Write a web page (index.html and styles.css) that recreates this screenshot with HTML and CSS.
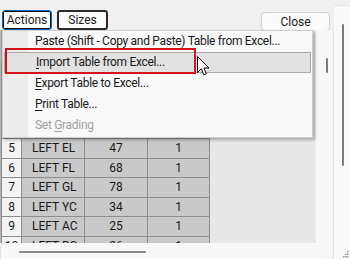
FILE: index.html
```html
<!DOCTYPE html>
<html lang="en">
<head>
  <meta charset="UTF-8" />
  <title>Grading Table</title>
  <link rel="stylesheet" href="styles.css">
</head>
<body>
  <div class="window">
    <div class="content">
      <div class="toolbar">
        <button class="btn btn-focus">Actions</button>
        <button class="btn btn-sizes">Sizes</button>
        <button class="btn btn-close">Close</button>
      </div>
      <div class="grid-area">
        <div class="grid-col">
          <div class="grid-view">
            <table class="grid">
              <colgroup>
                <col class="c-num"><col class="c-name"><col class="c-val"><col class="c-step">
              </colgroup>
              <tr class="head"><th></th><th>Point</th><th>Value</th><th>Step</th></tr>
              <tr><td class="num">1</td><td>LEFT AL</td><td class="mid">12</td><td class="mid">1</td></tr>
              <tr><td class="num">2</td><td>LEFT BL</td><td class="mid">20</td><td class="mid">1</td></tr>
              <tr><td class="num">3</td><td>LEFT CL</td><td class="mid">31</td><td class="mid">1</td></tr>
              <tr><td class="num">4</td><td>LEFT DL</td><td class="mid">40</td><td class="mid">1</td></tr>
              <tr><td class="num">5</td><td>LEFT EL</td><td class="mid">47</td><td class="mid">1</td></tr>
              <tr><td class="num">6</td><td>LEFT FL</td><td class="mid">68</td><td class="mid">1</td></tr>
              <tr><td class="num">7</td><td>LEFT GL</td><td class="mid">78</td><td class="mid">1</td></tr>
              <tr><td class="num">8</td><td>LEFT YC</td><td class="mid">34</td><td class="mid">1</td></tr>
              <tr><td class="num">9</td><td>LEFT AC</td><td class="mid">25</td><td class="mid">1</td></tr>
              <tr><td class="num">10</td><td>LEFT BC</td><td class="mid">26</td><td class="mid">1</td></tr>
            </table>
          </div>
          <div class="hscroll"><div class="hthumb"></div></div>
        </div>
        <div class="vscroll"><div class="vthumb"></div></div>
      </div>
    </div>
    <div class="outer-scroll">
      <div class="othumb"></div>
      <svg class="grip" width="6" height="7" viewBox="0 0 6 7">
        <rect x="4" y="0" width="1.5" height="1.5" fill="#9a9a9a"/>
        <rect x="2" y="2.5" width="1.5" height="1.5" fill="#9a9a9a"/>
        <rect x="4" y="2.5" width="1.5" height="1.5" fill="#9a9a9a"/>
        <rect x="0" y="5" width="1.5" height="1.5" fill="#9a9a9a"/>
        <rect x="2" y="5" width="1.5" height="1.5" fill="#9a9a9a"/>
        <rect x="4" y="5" width="1.5" height="1.5" fill="#9a9a9a"/>
      </svg>
    </div>

    <div class="menu">
      <div class="menu-item">Paste (Shift - Copy and Paste) Table from Excel...</div>
      <div class="menu-item hover"><u>I</u>mport Table from Excel...</div>
      <div class="menu-item"><u>E</u>xport Table to Excel...</div>
      <div class="menu-item"><u>P</u>rint Table...</div>
      <div class="menu-item disabled">Set <u>G</u>rading</div>
    </div>
    <div class="mark"></div>
    <svg class="cursor" width="14" height="21" viewBox="0 0 14 21">
      <path d="M0.5 0.5 L0.5 16.5 L4.3 12.8 L6.8 18.8 L9.3 17.8 L6.9 12 L12 12 Z" fill="#fff" stroke="#000" stroke-width="1" stroke-linejoin="round"/>
    </svg>
  </div>
</body>
</html>
```

FILE: styles.css
```css
* {
  box-sizing: border-box;
  margin: 0;
  padding: 0;
}
html, body {
  width: 350px;
  height: 259px;
  overflow: hidden;
  background: #f0f0f0;
  font-family: Roboto, "Liberation Sans", sans-serif;
  font-size: 12px;
  color: #1a1a1a;
}

.window {
  position: relative;
  display: flex;
  width: 350px;
  height: 259px;
}
.content {
  display: flex;
  flex-direction: column;
  width: 334px;
  height: 259px;
}

.toolbar {
  display: flex;
  align-items: flex-start;
  flex: none;
  height: 30px;
  padding-top: 10px;
}
.btn {
  font-family: inherit;
  font-size: 12px;
  color: #1a1a1a;
  background: #fbfbfb;
  height: 20px;
  border-radius: 3px;
}
.btn-focus {
  width: 50px;
  margin-left: 2px;
  border: 1px solid #0067c0;
  box-shadow: inset 0 0 0 1px #111;
}
.btn-sizes {
  width: 51px;
  margin-left: 5px;
  border: 2px solid #2a2a2a;
}
.btn-close {
  width: 69px;
  height: 19px;
  margin-top: 2px;
  margin-left: auto;
  margin-right: 4px;
  border: 1px solid #d2d2d2;
  border-radius: 4px;
}

.grid-area {
  display: flex;
  flex: 1;
  min-height: 0;
}
.grid-col {
  display: flex;
  flex-direction: column;
  width: 317px;
  min-height: 0;
}
.grid-view {
  flex: 1;
  min-height: 0;
  overflow: hidden;
  background: #e8e8e8;
  border-left: 1px solid #b4b4b4;
  border-right: 1px solid #fafafa;
}
.grid {
  border-collapse: collapse;
  table-layout: fixed;
  width: 209px;
}
.c-num { width: 20px; }
.c-name { width: 63px; }
.c-val { width: 63px; }
.c-step { width: 62px; }
.grid tr {
  height: 19.5px;
}
.grid tr.head {
  height: 30px;
}
.grid th {
  background: #f0f0f0;
  font-weight: normal;
  border: 1px solid #a0a0a0;
}
.grid td {
  background: #c9c9c9;
  border: 1px solid #8e8e8e;
  padding: 0 0 0 10px;
  white-space: nowrap;
  overflow: hidden;
}
.grid td.num {
  background: #f3f3f3;
  text-align: center;
  padding: 0;
}
.grid td.mid {
  text-align: center;
  padding: 0;
}

.hscroll {
  flex: none;
  height: 16px;
  padding: 8px 0 0 18px;
  background: #f8f8f8;
  border-top-left-radius: 6px;
  border-left: 1px solid #e2e2e2;
}
.hthumb {
  width: 127px;
  height: 2px;
  background: #8a8a8a;
  border-radius: 1px;
}
.vscroll {
  width: 17px;
  padding: 28px 0 0 9px;
  background: #f7f7f7;
  border-right: 1px solid #e4e4e4;
}
.vthumb {
  width: 2px;
  height: 15px;
  background: #7a7a7a;
  border-radius: 1px;
}

.outer-scroll {
  display: flex;
  flex-direction: column;
  align-items: flex-start;
  width: 16px;
  margin-top: 5px;
  padding: 18px 0 0 8px;
  background: #f9f9f9;
  border-top: 1px solid #e6e6e6;
}
.othumb {
  width: 2px;
  height: 142px;
  background: #7c7c7c;
  border-radius: 1px;
}
.grip {
  margin-top: auto;
  margin-bottom: 1px;
  margin-left: 1px;
}

.menu {
  position: absolute;
  left: 2px;
  top: 30px;
  width: 311px;
  height: 108px;
  background: linear-gradient(90deg, #ececec 0, #ececec 25px, #f9f9f9 25px);
  border: 1px solid #cfcfcf;
  box-shadow: 2px 2px 3px rgba(0, 0, 0, 0.28);
  letter-spacing: -0.3px;
}
.menu-item {
  height: 21px;
  line-height: 21px;
  padding-left: 32px;
  white-space: nowrap;
}
.menu-item u {
  text-decoration-thickness: 1px;
  text-underline-offset: 2px;
}
.menu-item.hover {
  margin: 0 1px;
  padding-left: 31px;
  background: #e2e2e2;
  border: 1px solid #a8a8a8;
  line-height: 19px;
}
.menu-item.disabled {
  color: #a0a0a0;
}
.mark {
  position: absolute;
  left: 5px;
  top: 48px;
  width: 191px;
  height: 26px;
  border: 2px solid #d0161c;
}
.cursor {
  position: absolute;
  left: 197px;
  top: 56px;
}
```
